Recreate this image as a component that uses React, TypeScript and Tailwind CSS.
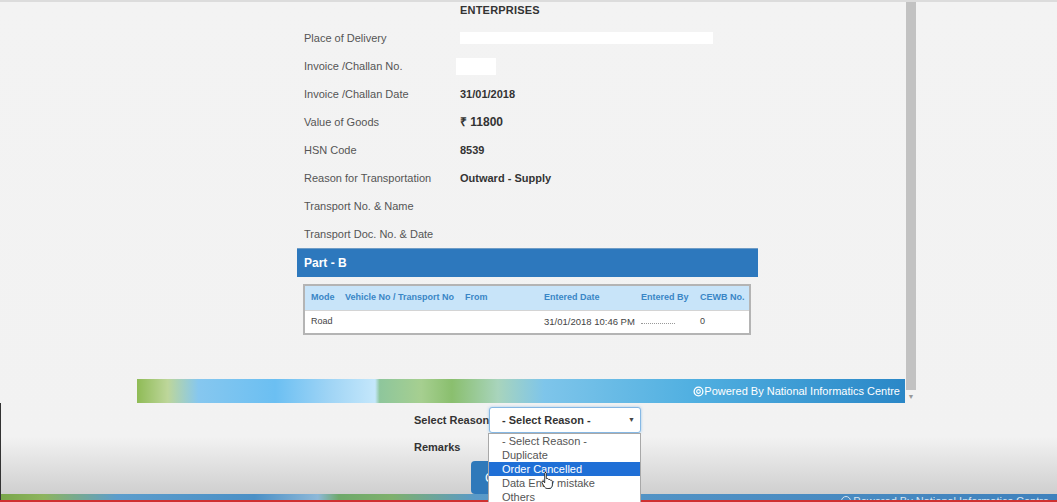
import React from 'react';

const rows: { label: string; value?: React.ReactNode }[] = [
  { label: 'Place of Delivery', value: <div className="h-[12px] w-[253px] bg-white" /> },
  { label: 'Invoice /Challan No.', value: <div className="ml-[-4px] h-[17px] w-[40px] bg-white" /> },
  { label: 'Invoice /Challan Date', value: '31/01/2018' },
  { label: 'Value of Goods', value: <span className="text-[12px]">₹ 11800</span> },
  { label: 'HSN Code', value: '8539' },
  { label: 'Reason for Transportation', value: 'Outward - Supply' },
  { label: 'Transport No. & Name' },
  { label: 'Transport Doc. No. & Date' },
];

const reasons = ['- Select Reason -', 'Duplicate', 'Order Cancelled', 'Data Entry mistake', 'Others'];

function PoweredIcon({ className }: { className?: string }) {
  return (
    <svg viewBox="0 0 12 12" className={className}>
      <circle cx="6" cy="6" r="4.8" fill="none" stroke="white" strokeWidth="1.4" />
      <circle cx="6" cy="6" r="2" fill="none" stroke="white" strokeWidth="1.2" />
    </svg>
  );
}

function HandCursor() {
  return (
    <svg viewBox="0 0 14 18" className="h-[18px] w-[14px]">
      <path
        d="M4 1.2c.8 0 1.3.5 1.3 1.3v5.2l.6-.2c.7-.2 1.3.1 1.5.6l.2.4.4-.1c.7-.2 1.3.1 1.5.7l.1.3.4-.1c.8-.1 1.4.4 1.4 1.2v3.4c0 1.9-1.3 3.6-3.4 3.6H6.1c-1 0-1.8-.5-2.4-1.3L1.1 12c-.4-.6-.3-1.3.2-1.6.5-.3 1.1-.2 1.5.3l.9 1.1V2.5c0-.8.5-1.300 1.3-1.3z"
        fill="white"
        stroke="#222"
        strokeWidth="0.9"
      />
    </svg>
  );
}

export default function App() {
  return (
    <div className="relative flex h-[502px] w-[1057px] flex-col overflow-hidden bg-[linear-gradient(180deg,#f3f3f3_0%,#f2f2f2_87%,#cfcfcf_98.4%)] font-['Liberation_Sans',Arial,sans-serif]">
      <div className="h-[2px] w-full bg-[#dcdcdc]" />

      {/* upper panel with scroll area */}
      <div className="flex h-[401px]">
        <div className="w-[137px]" />
        <div className="flex w-[768px] flex-col">
          <div className="h-[377px]">
            <div className="ml-[160px] w-[461px]">
              <div className="grid h-[15px] grid-cols-[163px_1fr] items-center">
                <div />
                <div className="text-[11px] font-bold tracking-[0.2px] text-[#333]">ENTERPRISES</div>
              </div>
              <div className="mt-[6px]">
                {rows.map((r) => (
                  <div key={r.label} className="grid h-[28px] grid-cols-[163px_1fr] items-center pt-[2px]">
                    <div className="pl-[7px] text-[11px] text-[#555]">{r.label}</div>
                    <div className="text-[11px] font-bold text-[#333]">{r.value}</div>
                  </div>
                ))}
              </div>

              <div className="mt-[1px] flex h-[29px] items-center border-t border-[#6f9cc6] bg-[#2d78bd] pl-[7px] text-[12px] font-bold text-white">
                Part - B
              </div>

              <div className="ml-[6px] mt-[7px] w-[448px] border-2 border-[#b4b4b4] bg-white">
                <div className="grid h-[24px] grid-cols-[34px_120px_79px_97px_59px_1fr] items-center bg-[#c8e4f9] pl-[6px] text-[9px] font-bold text-[#3a86c6]">
                  <div>Mode</div>
                  <div>Vehicle No / Transport No</div>
                  <div>From</div>
                  <div>Entered Date</div>
                  <div>Entered By</div>
                  <div>CEWB No.</div>
                </div>
                <div className="grid h-[23px] grid-cols-[34px_120px_79px_97px_59px_1fr] items-center border-t border-[#d4d4d4] pl-[6px] text-[9px] text-[#444]">
                  <div>Road</div>
                  <div />
                  <div />
                  <div className="text-[9.5px]">31/01/2018 10:46 PM</div>
                  <div className="pt-[3px]">
                    <div className="w-[34px] border-t border-dotted border-[#999]" />
                  </div>
                  <div>0</div>
                </div>
              </div>
            </div>
          </div>

          {/* NIC banner */}
          <div className="flex h-[24px] items-center justify-end bg-[linear-gradient(90deg,#8fbb56_0%,#bdd69a_4%,#86c7ef_8%,#6bbff2_18%,#9fd4f5_25%,#c4e7fb_31%,#8ec69c_31.6%,#a6cf90_37%,#8abf6e_41%,#a8d4bc_47%,#7ec5ea_53%,#51b0e1_72%,#2a87c7_100%)] pr-[5px]">
            <PoweredIcon className="h-[11px] w-[11px]" />
            <span className="text-[11px] text-white">Powered By National Informatics Centre</span>
          </div>
        </div>

        {/* scrollbar */}
        <div className="ml-[1px] flex w-[10px] flex-col items-center">
          <div className="h-[388px] w-full bg-[#c2c2c2]" />
          <div className="mt-[3px] text-[7px] leading-none text-[#999]">▼</div>
        </div>
      </div>

      {/* cancel form */}
      <div className="relative flex-1 border-l border-[#333] pl-[413px] pt-[4px]">
        <div className="flex items-center">
          <div className="w-[75px] whitespace-nowrap text-[11px] font-bold text-[#333]">Select Reason</div>
          <div className="relative flex h-[26px] w-[152px] items-center justify-between rounded-[3px] border border-[#86b8e4] bg-white pl-[12px] pr-[5px] shadow-[0_0_3px_rgba(102,175,233,0.6)]">
            <span className="text-[11px] font-bold text-[#333]">- Select Reason -</span>
            <span className="text-[7px] text-[#444]">▼</span>

            <div className="absolute left-[-2px] top-[25px] z-10 w-[153px] border border-[#a8a8a8] bg-white">
              {reasons.map((o) => (
                <div
                  key={o}
                  className={
                    o === 'Order Cancelled'
                      ? 'h-[14px] bg-[#1f6fd6] pl-[13px] text-[11px] leading-[14px] text-white'
                      : 'h-[14px] pl-[13px] text-[11px] leading-[14px] text-[#555]'
                  }
                >
                  {o}
                </div>
              ))}
              <div className="absolute left-[52px] top-[37px]">
                <HandCursor />
              </div>
            </div>
          </div>
        </div>
        <div className="mt-[4px] flex h-[20px] items-center text-[11px] font-bold text-[#333]">Remarks</div>
        <div className="ml-[57px] mt-[4px] flex h-[33px] w-[86px] items-center rounded-[4px] bg-[#2f79ba] pl-[14px] text-[12px] text-white">
          Cancel
        </div>
      </div>

      {/* bottom strip */}
      <div className="flex h-[6px] justify-end overflow-hidden border-l border-[#333] bg-[linear-gradient(90deg,#79a64a_0%,#8db45e_4%,#5c9dcc_11%,#4b90c6_24%,#8db8d8_30%,#6ea96a_32%,#7eb06c_37%,#5a9ac8_45%,#3e81bd_100%)] pr-[8px]">
        <div className="flex items-start pt-[1px] text-[11px] leading-[12px] text-[#d6e4f0]">
          <span className="mr-[2px] mt-[1px] h-[10px] w-[10px] rounded-full border border-[#d6e4f0]" />
          Powered By National Informatics Centre
        </div>
      </div>
      <div className="h-[2px] bg-[#cf3030]" />
    </div>
  );
}
